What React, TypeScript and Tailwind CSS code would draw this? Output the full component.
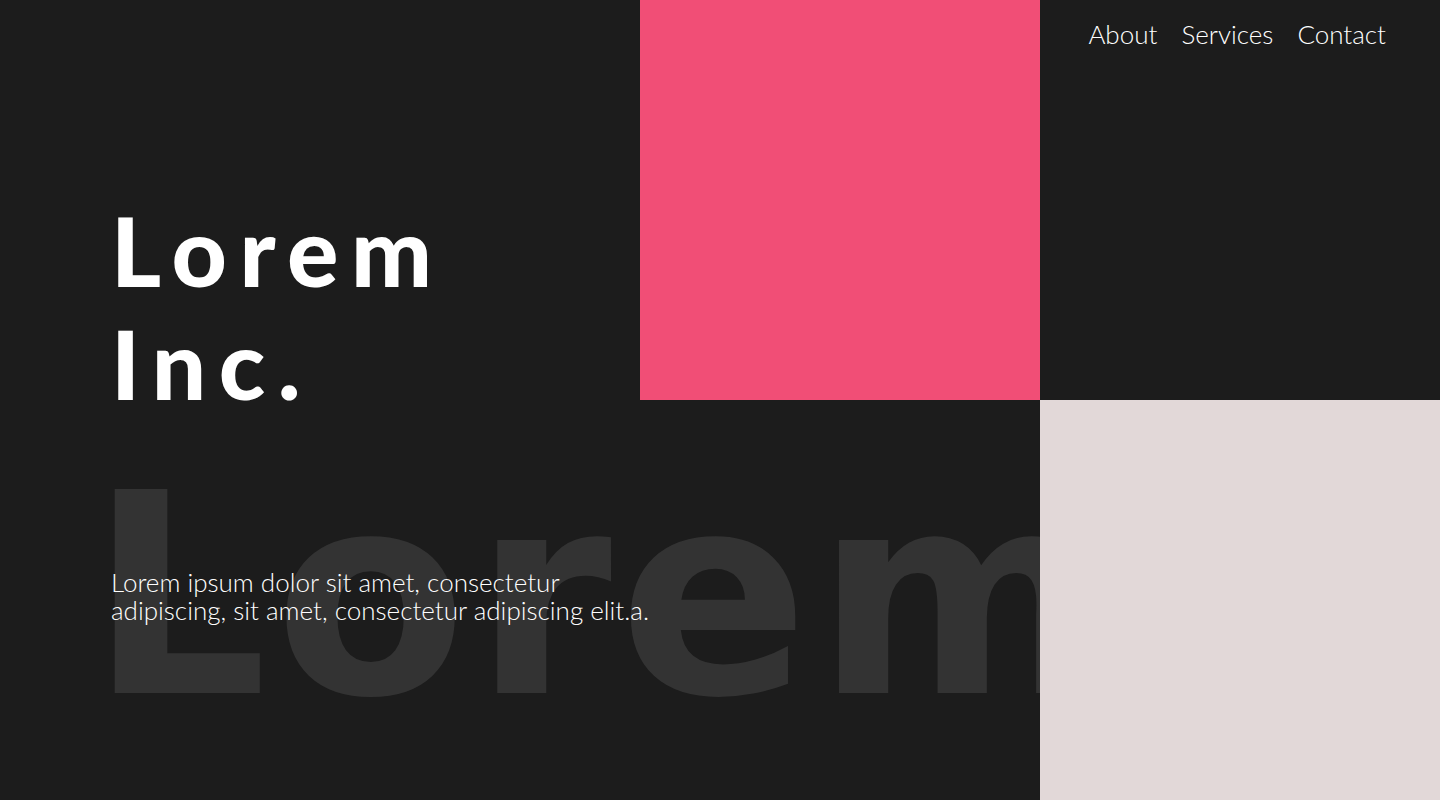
import React from 'react';

const App: React.FC = () => {
  return (
    <div className="relative grid h-[800px] w-[1440px] grid-cols-[640px_400px_400px] grid-rows-[400px_400px] overflow-hidden bg-[#1c1c1c] font-['Lato','Noto_Sans',sans-serif]">
      {/* big faded word behind everything */}
      <div className="pointer-events-none absolute left-[89px] top-[456px] z-0 select-none whitespace-nowrap font-['DejaVu_Sans',sans-serif] text-[280px] font-bold leading-none tracking-[7px] text-[#333333]">
        Lorem
      </div>

      {/* left column: title + intro */}
      <div className="relative z-10 col-start-1 row-span-2 row-start-1 flex flex-col pl-[111px] pt-[193px]">
        <h1 className="text-[96px] font-black leading-[113px] tracking-[0.13em] text-white">
          Lorem
          <br />
          Inc.
        </h1>
        <p className="mt-[149px] whitespace-nowrap text-[26px] font-light leading-[28px] text-white">
          <span className="block">Lorem ipsum dolor sit amet, consectetur</span>
          <span className="block">adipiscing, sit amet, consectetur adipiscing elit.a.</span>
        </p>
      </div>

      <div className="relative z-10 col-start-2 row-start-1 bg-[#f14e76]" />

      <nav className="relative z-10 col-start-3 row-start-1 flex justify-end gap-[24px] pr-[54px] pt-[20px] text-[26px] font-light leading-[28px] text-white">
        <a href="#about">About</a>
        <a href="#services">Services</a>
        <a href="#contact">Contact</a>
      </nav>

      <div className="relative z-10 col-start-3 row-start-2 bg-[#e2d8d8]" />
    </div>
  );
};

export default App;
